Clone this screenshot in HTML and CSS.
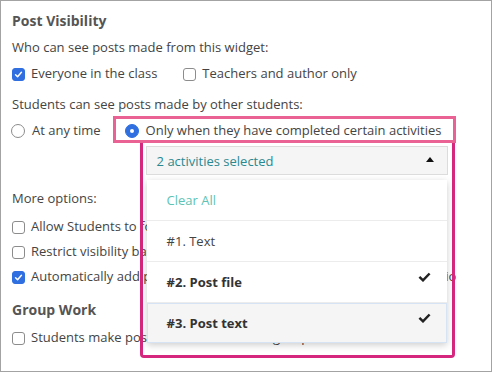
FILE: index.html
```html
<!DOCTYPE html>
<html>
<head>
<meta charset="utf-8">
<link rel="stylesheet" href="styles.css">
</head>
<body>
<div class="panel">
  <h2 class="heading">Post Visibility</h2>
  <p class="text">Who can see posts made from this widget:</p>
  <div class="row check-row">
    <label class="opt"><span class="cb checked"><svg viewBox="0 0 12 12" width="11" height="11"><path d="M2.8 6.3 L5 8.5 L9.2 3.6" fill="none" stroke="#fff" stroke-width="1.6" stroke-linecap="round" stroke-linejoin="round"/></svg></span>Everyone in the class</label>
    <label class="opt"><span class="cb"></span>Teachers and author only</label>
  </div>
  <p class="text text-gap">Students can see posts made by other students:</p>
  <div class="row radio-row">
    <label class="opt"><span class="radio"></span>At any time</label>
    <div class="highlight">
      <label class="opt"><span class="radio on"></span>Only when they have completed certain activities</label>
      <div class="callout">
        <div class="select">
          <span class="select-text">2 activities selected</span>
          <span class="caret"></span>
        </div>
        <ul class="menu">
          <li class="item clear">Clear All</li>
          <li class="item">#1. Text</li>
          <li class="item bold">#2. Post file<svg class="tick" viewBox="0 0 13 10" width="13" height="10"><path d="M1.4 4.8 L5 8.3 L11.6 1.5" fill="none" stroke="#222" stroke-width="2.5" stroke-linejoin="miter"/></svg></li>
          <li class="item bold active">#3. Post text<svg class="tick" viewBox="0 0 13 10" width="13" height="10"><path d="M1.4 4.8 L5 8.3 L11.6 1.5" fill="none" stroke="#222" stroke-width="2.5" stroke-linejoin="miter"/></svg></li>
        </ul>
      </div>
    </div>
  </div>
  <p class="text more">More options:</p>
  <div class="stack">
    <label class="opt"><span class="cb"></span>Allow Students to follow up on posts made by other students</label>
    <label class="opt"><span class="cb"></span>Restrict visibility based on student groups</label>
    <label class="opt"><span class="cb checked"><svg viewBox="0 0 12 12" width="11" height="11"><path d="M2.8 6.3 L5 8.5 L9.2 3.6" fill="none" stroke="#fff" stroke-width="1.6" stroke-linecap="round" stroke-linejoin="round"/></svg></span>Automatically add posts made in this board to each student's portfolio</label>
  </div>
  <h2 class="heading group">Group Work</h2>
  <div class="row last">
    <label class="opt"><span class="cb"></span>Students make posts as a team in small groups</label>
  </div>
</div>
</body>
</html>
```
FILE: styles.css
```css
* { box-sizing: border-box; }
html, body { margin: 0; padding: 0; background: #fff; }
body {
  font-family: "Open Sans", "Noto Sans", sans-serif;
  font-size: 13px;
  color: #444;
}
.panel {
  width: 492px;
  height: 372px;
  border: 1px solid #a3a3a3;
  padding: 10px 11px 0 11px;
  overflow: hidden;
}
.heading {
  margin: 0;
  font-size: 14px;
  font-weight: 700;
  line-height: 20px;
  color: #555;
}
.text {
  margin: 7px 0 0;
  line-height: 18px;
}
.text-gap { margin-top: 13px; }
.more { margin-top: 46px; }
.row {
  display: flex;
  align-items: center;
}
.opt {
  display: flex;
  align-items: center;
  line-height: 18px;
  white-space: nowrap;
}
.check-row { margin-top: 8px; height: 18px; gap: 26px; }
.radio-row { margin-top: 3px; height: 27px; gap: 12px; }
.cb {
  flex: none;
  width: 13px;
  height: 13px;
  border: 1px solid #8c8c8c;
  border-radius: 3px;
  margin-right: 6px;
  position: relative;
  top: 1px;
  display: flex;
  align-items: center;
  justify-content: center;
  background: #fff;
}
.cb.checked {
  background: #2f6fe0;
  border-color: #2f6fe0;
}
.radio {
  flex: none;
  width: 14px;
  height: 14px;
  border: 1px solid #8c8c8c;
  border-radius: 50%;
  margin-left: -1px;
  margin-right: 7px;
  position: relative;
  top: 1px;
  display: flex;
  align-items: center;
  justify-content: center;
}
.radio.on {
  background: #2f6fe0;
  border-color: #2f6fe0;
}
.radio.on::after {
  content: "";
  width: 4px;
  height: 4px;
  border-radius: 50%;
  background: #fff;
}
.highlight {
  position: relative;
  height: 27px;
  border: 3px solid #ea6293;
  padding: 0 12px 0 10px;
  display: flex;
  align-items: center;
}
.callout {
  position: absolute;
  left: 24px;
  top: 24px;
  width: 315px;
  height: 215px;
  border: 3px solid #d4277d;
  border-top: 0;
  border-radius: 0 0 4px 4px;
  padding: 3px 4px 0 3px;
  z-index: 5;
}
.select {
  height: 29px;
  border: 1px solid #dcdcdc;
  background: #f5f5f5;
  display: flex;
  align-items: center;
  justify-content: space-between;
  padding: 0 13px 0 10px;
}
.select-text { color: #2a8990; line-height: 18px; }
.caret {
  width: 0;
  height: 0;
  border-left: 4px solid transparent;
  border-right: 4px solid transparent;
  border-bottom: 5px solid #111;
  margin-top: -2px;
}
.menu {
  list-style: none;
  margin: 5px 1px 0 1px;
  padding: 0;
  background: #fff;
  box-shadow: 0 2px 7px rgba(0, 0, 0, 0.2);
}
.item {
  height: 41px;
  border-bottom: 1px solid #ececec;
  padding: 0 16px 0 20px;
  display: flex;
  align-items: center;
  justify-content: space-between;
  line-height: 18px;
  color: #444;
}
.item.clear { color: #5cc3b5; }
.item.bold { font-weight: 700; color: #333; }
.item.active {
  height: 40px;
  background: #f5f5f5;
  border: 1px solid #d6e3f4;
  padding-left: 19px;
  padding-right: 15px;
}
.tick {
  flex: none;
  margin-bottom: 10px;
}
.stack {
  margin-top: 10px;
  display: flex;
  flex-direction: column;
  gap: 7px;
}
.group { margin-top: 15px; }
.last { margin-top: 8px; height: 18px; }
```
